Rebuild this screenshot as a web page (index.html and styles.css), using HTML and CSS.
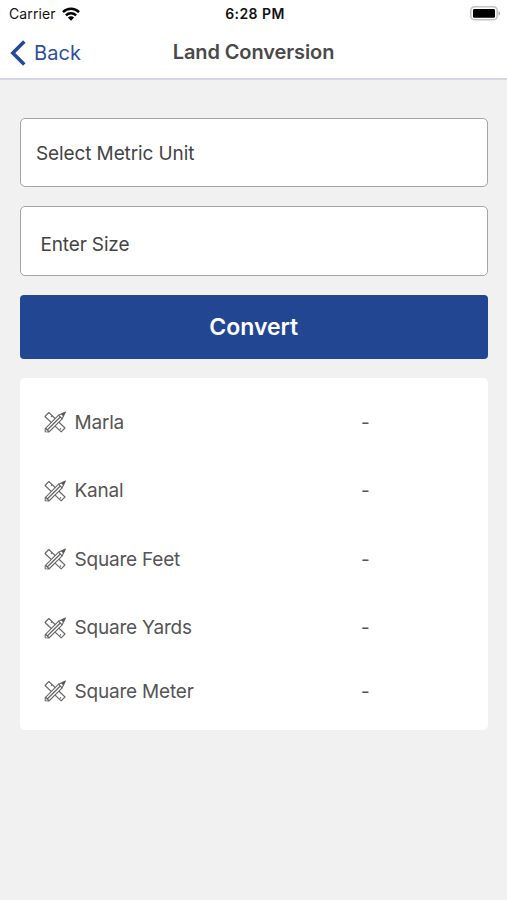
FILE: index.html
```html
<!DOCTYPE html>
<html lang="en">
<head>
<meta charset="utf-8">
<title>Land Conversion</title>
<link rel="stylesheet" href="styles.css">
</head>
<body>
<svg class="defs" aria-hidden="true">
  <symbol id="tools" viewBox="0 0 22 22">
    <g fill="#fff" stroke="#686868" stroke-width="1.1" stroke-linejoin="round">
      <path d="M1 5.500 4.800 1.500 21 17 17.200 20.900Z"/>
      <path d="m8.200 4.700-1.200 1.200m8.700 12.800 1.300-1.300"/>
      <path d="M1.200 17.600 14.600 4.200 18.200 7.800 4.900 21 1.200 20.700Z"/>
      <path d="M3 19.200 16.300 6M1.600 17.300l3.400 3.400" stroke-width="1.300"/>
      <path d="M14.600 4.200 21.400 1l-3.200 6.800Z"/>
    </g>
    <path d="m17 3.100 4.400-2.100-2.200 4.500Z" fill="#555"/>
  </symbol>
</svg>
<header class="top">
  <div class="status">
    <div class="carrier"><span class="carrier-name">Carrier</span>
      <svg class="wifi" viewBox="0 0 18 14" fill="none" stroke="#000" stroke-width="2.5">
        <path d="M1 5.1a11.3 11.3 0 0 1 16 0M3.9 8.3a7.2 7.2 0 0 1 10.2 0"/>
        <path d="M9 13.7 5.9 10.6a4.4 4.4 0 0 1 6.2 0Z" fill="#000" stroke="none"/>
      </svg>
    </div>
    <div class="time">6:28 PM</div>
    <svg class="battery" viewBox="0 0 31 15">
      <rect x=".8" y=".8" width="26.4" height="13" rx="3.8" fill="#fff" stroke="#c4c4c4" stroke-width="1.6"/>
      <rect x="3" y="3" width="22" height="8.8" rx="1.4"/>
      <path d="M28.6 5.2c2 .5 2 3.700 0 4.200Z" fill="#aaa"/>
    </svg>
  </div>
  <nav class="nav">
    <a class="back">
      <svg class="chevron" viewBox="0 0 16 26" fill="none" stroke="#24479a" stroke-width="3.500"><path d="M14.300 1.500 2.800 13l11.500 11.500"/></svg>
      <span>Back</span>
    </a>
    <h1 class="title">Land Conversion</h1>
  </nav>
</header>
<main class="content">
  <div class="field"><span class="unit">Select Metric Unit</span></div>
  <div class="field field-size"><span class="size">Enter Size</span></div>
  <button class="convert"><span>Convert</span></button>
  <section class="results">
    <div class="row"><svg class="icon"><use href="#tools"/></svg><span class="name">Marla</span><span class="value">-</span></div>
    <div class="row"><svg class="icon"><use href="#tools"/></svg><span class="name">Kanal</span><span class="value">-</span></div>
    <div class="row"><svg class="icon"><use href="#tools"/></svg><span class="name">Square Feet</span><span class="value">-</span></div>
    <div class="row"><svg class="icon"><use href="#tools"/></svg><span class="name">Square Yards</span><span class="value">-</span></div>
    <div class="row"><svg class="icon"><use href="#tools"/></svg><span class="name">Square Meter</span><span class="value">-</span></div>
  </section>
</main>
</body>
</html>
```
FILE: styles.css
```css
* { box-sizing: border-box; }
body { margin: 0; min-height: 900px; background: #f1f1f1; font-family: Inter, "Liberation Sans", sans-serif; color: #444; }
.defs { position: absolute; width: 0; height: 0; }
.top { height: 80px; background: #fff; border-bottom: 2px solid #d6d7e6; }
.status { display: grid; grid-template-columns: 1fr auto 1fr; align-items: center; height: 27px; padding: 0 6px 0 9px; color: #111; }
.carrier { display: flex; align-items: center; gap: 6px; font-size: 14px; letter-spacing: .1px; }
.wifi { width: 18px; height: 14px; }
.time { font-size: 14px; font-weight: 600; letter-spacing: .45px; }
.battery { width: 31px; height: 15px; justify-self: end; }
.nav { display: grid; grid-template-columns: 1fr auto 1fr; align-items: center; height: 51px; padding: 0 10px; }
.back { display: flex; align-items: center; gap: 8px; color: #2d4f9f; font-size: 20px; letter-spacing: .1px; }
.chevron { width: 16px; height: 26px; }
.title { margin: 0 0 1px; font-size: 20px; font-weight: 600; letter-spacing: -.1px; color: #4a4a4a; }
.content { display: flex; flex-direction: column; padding: 38px 19.500px 0 20px; }
.field { display: flex; align-items: center; height: 69px; padding: 1px 15px 0; background: #fff; border: 1px solid #a5a5a5; border-radius: 5px; font-size: 19px; letter-spacing: -.11px; }
.field-size { height: 70px; margin-top: 19px; padding: 6px 19.500px 0; letter-spacing: -.15px; }
.convert { display: flex; align-items: center; justify-content: center; height: 64px; margin-top: 19px; padding: 0 0 1px; border: 0; border-radius: 4px; background: #234693; color: #fff; font: 600 23px Inter, "Liberation Sans", sans-serif; }
.results { display: grid; grid-template-rows: repeat(4, 68.500px) 58px; height: 352px; margin-top: 19px; padding: 10px 23px; background: #fff; border-radius: 5px; }
.row { display: grid; grid-template-columns: 23px 277px auto; column-gap: 8.500px; align-items: center; font-size: 19px; letter-spacing: -.2px; color: #555; }
.icon { width: 22px; height: 22px; justify-self: end; }
.value { padding-left: 1px; }
```
